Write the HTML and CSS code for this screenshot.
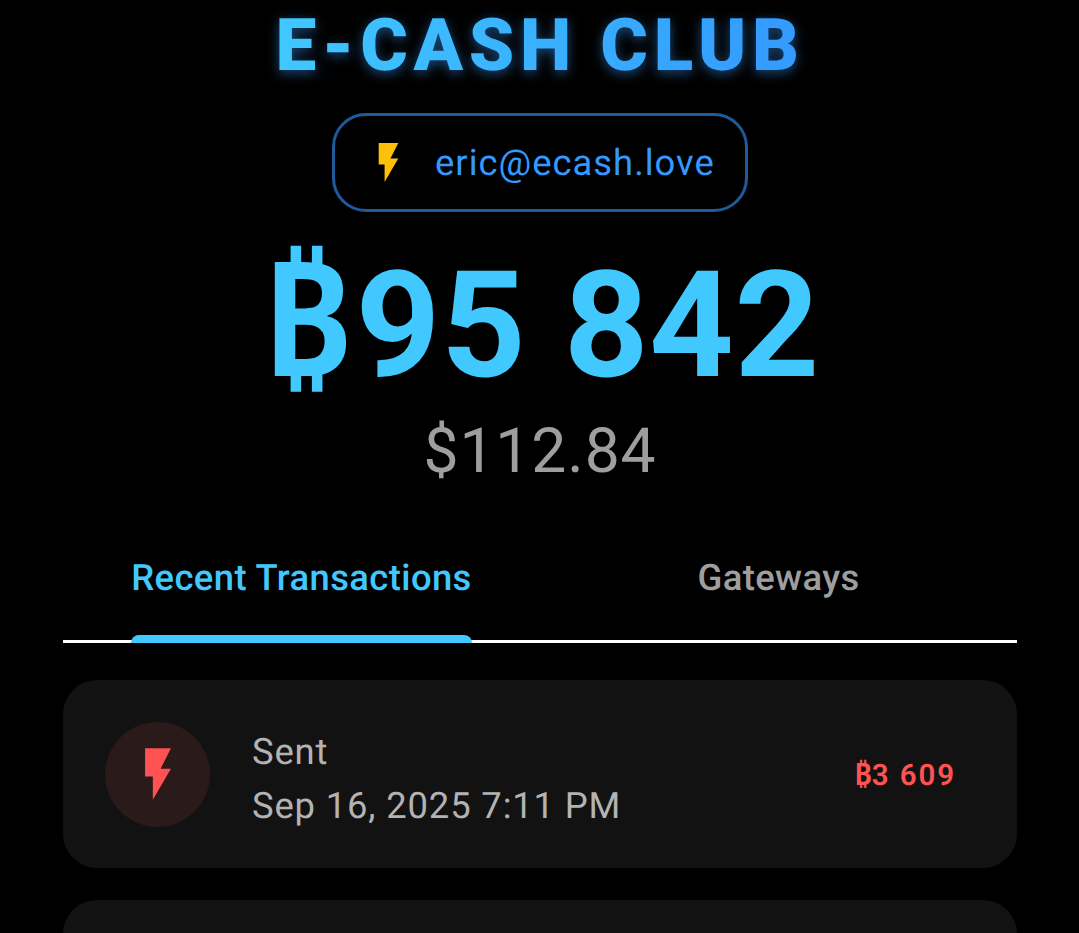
FILE: index.html
```html
<!DOCTYPE html>
<html lang="en">
  <head>
    <meta charset="UTF-8" />
    <meta name="viewport" content="width=device-width, initial-scale=1.0" />
    <title>E-Cash Club</title>
    <link rel="stylesheet" href="styles.css">
  </head>
  <body>
    <div class="page">
      <header class="top">
        <h1 class="brand">E-CASH CLUB</h1>
        <div class="address">
          <svg class="address-icon" viewBox="0 0 24 24"><path d="M7 2v11h3v9l7-12h-4l4-8z" /></svg>
          <span>eric@ecash.love</span>
        </div>
        <div class="balance"><span class="coin">₿</span>95 842</div>
        <div class="fiat">$112.84</div>
      </header>

      <nav class="tabs">
        <div class="tab active">Recent Transactions</div>
        <div class="tab">Gateways</div>
      </nav>

      <section class="list">
        <div class="tx">
          <div class="tx-badge">
            <svg class="tx-icon" viewBox="0 0 24 24"><path d="M7 2v11h3v9l7-12h-4l4-8z" /></svg>
          </div>
          <div class="tx-info">
            <div>Sent</div>
            <div>Sep 16, 2025 7:11 PM</div>
          </div>
          <div class="tx-amount"><span class="coin">₿</span>3 609</div>
        </div>
        <div class="tx"></div>
      </section>
    </div>
  </body>
</html>
```

FILE: styles.css
```css
html, body {
  height: 933px;
  overflow: hidden;
}

body {
  margin: 0;
  background-color: #000;
  color: #fff;
  font-family: Roboto, "Liberation Sans", sans-serif;
  text-rendering: geometricPrecision;
}

.page {
  padding: 0 62px 0 63px;
}

.top {
  display: flex;
  flex-direction: column;
  align-items: center;
}

.coin {
  font-family: "Noto Sans", sans-serif;
  font-size: 1.05em;
  font-weight: 600;
  line-height: 0;
  letter-spacing: 0;
}

.brand {
  margin: 0;
  padding-top: 2px;
  font-size: 72.8px;
  line-height: 87px;
  font-weight: 900;
  letter-spacing: 5.6px;
  background: linear-gradient(90deg, #40c8ff, #3399ff);
  -webkit-background-clip: text;
  background-clip: text;
  color: transparent;
  filter: drop-shadow(0 3px 6px rgba(51, 153, 255, 0.5));
}

.address {
  margin-top: 24px;
  box-sizing: border-box;
  width: 416px;
  height: 99px;
  display: flex;
  align-items: center;
  padding-left: 30px;
  gap: 23px;
  border: 3px solid #1f5a9c;
  border-radius: 34px;
  color: #3399ff;
  font-size: 36.4px;
  letter-spacing: 1px;
}

.address-icon {
  width: 47px;
  height: 47px;
  fill: #ffc107;
}

.balance {
  margin-top: 24px;
  font-size: 148px;
  line-height: 182px;
  font-weight: 700;
  letter-spacing: 0.5px;
  color: #40c8ff;
}

.balance .coin {
  margin-right: 4px;
  font-size: 1.08em;
}

.fiat {
  margin-top: -6px;
  font-size: 62.4px;
  line-height: 79px;
  letter-spacing: 0.9px;
  color: #9e9e9e;
}

.tabs {
  margin-top: 30px;
  display: grid;
  grid-template-columns: 1fr 1fr;
  height: 122px;
  border-bottom: 3px solid #fff;
  box-sizing: border-box;
}

.tab {
  position: relative;
  display: flex;
  justify-content: center;
  padding-top: 36px;
  font-size: 36.4px;
  line-height: 42px;
  font-weight: 500;
  letter-spacing: 0.4px;
  color: #9e9e9e;
}

.tab.active {
  color: #40c8ff;
}

.tab.active::after {
  content: "";
  position: absolute;
  left: 68px;
  right: 68px;
  bottom: -3px;
  height: 8px;
  background-color: #40c8ff;
  border-radius: 8px 8px 0 0;
}

.list {
  margin-top: 37px;
  display: flex;
  flex-direction: column;
  gap: 32px;
}

.tx {
  box-sizing: border-box;
  height: 188px;
  display: flex;
  align-items: center;
  padding: 0 61px 0 42px;
  background-color: #121212;
  border-radius: 34px;
}

.tx-badge {
  width: 105px;
  height: 105px;
  flex: none;
  display: flex;
  align-items: center;
  justify-content: center;
  background-color: #2a1a1a;
  border-radius: 50%;
}

.tx-icon {
  width: 62px;
  height: 62px;
  fill: #ff5252;
}

.tx-info {
  margin-left: 42px;
  flex: 1;
  padding-top: 10px;
  font-size: 36.4px;
  line-height: 54px;
  letter-spacing: 0.85px;
  color: #b3b3b3;
}

.tx-amount {
  padding-top: 4px;
  font-size: 29.5px;
  font-weight: 600;
  letter-spacing: 1.9px;
  color: #ff5252;
}
```
